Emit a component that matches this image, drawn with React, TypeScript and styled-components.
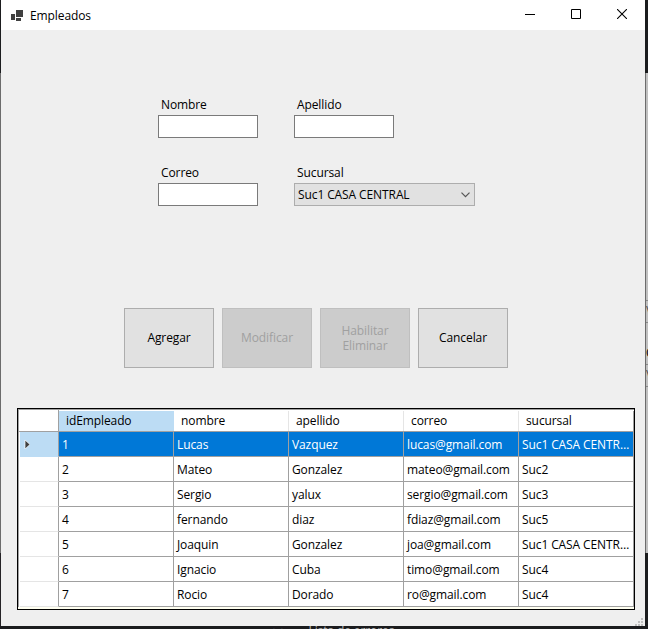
import React from "react";
import styled, { createGlobalStyle, css } from "styled-components";

const GlobalStyle = createGlobalStyle`
  * { box-sizing: border-box; }
  body { margin: 0; overflow: hidden; }
`;

const Desktop = styled.div`
  width: 648px;
  height: 629px;
  display: grid;
  grid-template-columns: 1px 644px 3px;
  grid-template-rows: 626px 3px;
  overflow: hidden;
  background: #1b1c1e;
  color: #000;
  font: 12px/15px "Open Sans", "Noto Sans", sans-serif;
  letter-spacing: -0.1px;
  white-space: nowrap;
`;

const LeftEdge = styled.div`
  background: linear-gradient(#1b1c1e 73px, #6c6c6c 73px, #6c6c6c 553px, #252326 553px);
`;

const RightEdge = styled.div`
  display: flex;
  flex-direction: column;
  padding-top: 73px;
`;

const BackPanel = styled.div`
  height: 480px;
  background: #c0c0c0;
  border-left: 1px solid #6c6c6c;
  padding-top: 227px;
  overflow: hidden;
`;

const BackField = styled.div`
  height: 23px;
  border: solid #8a8a8a;
  border-width: 1px 0;
  line-height: 19px;
  color: #444;
`;

const BackLabel = styled.div`
  height: 41px;
  padding-top: 22px;
`;

const BackStatus = styled.div`
  grid-column: 1 / -1;
  height: 3px;
  display: flex;
  gap: 10px;
  padding-left: 257px;
  overflow: hidden;
  color: #b8b8b8;
  line-height: 9px;
`;

const Window = styled.main`
  display: flex;
  flex-direction: column;
  background: #efefef;
`;

const TitleBar = styled.header`
  height: 30px;
  display: flex;
  align-items: center;
  background: #fff;
  padding-left: 9px;
`;

const Title = styled.span`
  flex: 1;
  padding-left: 6px;
`;

const CaptionButton = styled.button`
  width: 46px;
  height: 30px;
  padding: 0 0 2px;
  border: 0;
  background: none;
  display: grid;
  place-items: center;
`;

const Form = styled.section`
  display: grid;
  grid-template-columns: 100px 181px;
  column-gap: 36px;
  row-gap: 27px;
  padding: 67px 0 0 157px;
`;

const Field = styled.label`
  display: flex;
  flex-direction: column;
  gap: 3px;
  height: 41px;
`;

const FieldLabel = styled.span`
  padding-left: 3px;
`;

const TextBox = styled.input`
  width: 100px;
  height: 23px;
  border: 1px solid #7a7a7a;
  background: #fff;
`;

const Combo = styled.div`
  height: 23px;
  border: 1px solid #adadad;
  background: #e1e1e1;
  display: flex;
  align-items: center;
  justify-content: space-between;
  padding: 0 4px 0 3px;
`;

const Actions = styled.div`
  display: flex;
  gap: 8px;
  padding: 102px 0 0 123px;
`;

const ActionButton = styled.button`
  width: 90px;
  height: 60px;
  padding: 0 0 1px;
  font: inherit;
  letter-spacing: inherit;
  color: #000;
  border: 1px solid #adadad;
  background: #e1e1e1;
  white-space: pre-line;
  &:disabled {
    color: #a0a0a0;
    border-color: #bfbfbf;
    background: #cccccc;
  }
`;

const Grid = styled.div`
  width: 618px;
  height: 202px;
  margin: 40px 0 0 16px;
  border: 1px solid #000;
  background: #fffff0;
`;

const Rows = styled.div`
  border: solid #a0a0a0;
  border-width: 1px 0 0 1px;
  background: #fff;
`;

const Row = styled.div<{ $head?: boolean }>`
  height: ${(p) => (p.$head ? 22 : 25)}px;
  display: grid;
  grid-template-columns: 40px repeat(5, 115px);
`;

const HeadCell = styled.div<{ $active?: boolean; $last?: boolean }>`
  border-bottom: 1px solid #a0a0a0;
  padding: 3px 0 0 7px;
  background: linear-gradient(${(p) => (p.$active ? "#bcdcf4, #bcdcf4" : "#e5e5e5, #e5e5e5")}) right 1px top 1px / 1px 100% no-repeat;
  background-position: right 0 top 1px;
  ${(p) => p.$active && css`background-size: 100% 100%;`}
  ${(p) => p.$last && css`background-image: linear-gradient(#a0a0a0, #a0a0a0);`}
`;

const Corner = styled.div`
  border: solid #a0a0a0;
  border-width: 0 1px 1px 0;
`;

const RowHead = styled.div<{ $active?: boolean }>`
  margin-left: 1px;
  border-right: 1px solid #a0a0a0;
  border-bottom: 1px solid ${(p) => (p.$active ? "#bcdcf4" : "#e5e5e5")};
  background: ${(p) => (p.$active ? "#bcdcf4" : "#fff")};
  padding: 7px 0 0 4px;
`;

const Cell = styled.div<{ $active?: boolean }>`
  border: solid #a0a0a0;
  border-width: 0 1px 1px 0;
  padding: 5px 3px 0;
  overflow: hidden;
  text-overflow: ellipsis;
  color: ${(p) => (p.$active ? "#fff" : "#000")};
  background: ${(p) => (p.$active ? "#0078d7" : "#fff")};
`;

const GripRow = styled.div`
  display: flex;
  justify-content: flex-end;
  padding: 8px 2px 0 0;
`;

const columns = ["idEmpleado", "nombre", "apellido", "correo", "sucursal"];
const employees = [
  ["1", "Lucas", "Vazquez", "lucas@gmail.com", "Suc1 CASA CENTRAL"],
  ["2", "Mateo", "Gonzalez", "mateo@gmail.com", "Suc2"],
  ["3", "Sergio", "yalux", "sergio@gmail.com", "Suc3"],
  ["4", "fernando", "diaz", "fdiaz@gmail.com", "Suc5"],
  ["5", "Joaquin", "Gonzalez", "joa@gmail.com", "Suc1 CASA CENTRAL"],
  ["6", "Ignacio", "Cuba", "timo@gmail.com", "Suc4"],
  ["7", "Rocio", "Dorado", "ro@gmail.com", "Suc4"],
];

const AppIcon = () => (
  <svg width="14" height="13" viewBox="0 0 14 13" fill="#404040" shapeRendering="crispEdges">
    <path d="M1 5h4v6H1zM6 1h7v7H6zM6 9h5v3H6z" />
  </svg>
);

const Grip = () => (
  <svg width="8" height="8" fill="#bfbfbf" shapeRendering="crispEdges">
    <path d="M6 0h2v2H6zM3 3h2v2H3zM6 3h2v2H6zM0 6h2v2H0zM3 6h2v2H3zM6 6h2v2H6z" />
  </svg>
);

export default function App() {
  return (
    <>
      <GlobalStyle />
      <Desktop>
        <LeftEdge />
        <Window>
          <TitleBar>
            <AppIcon />
            <Title>Empleados</Title>
            <CaptionButton aria-label="Minimizar">
              <svg width="10" height="10" shapeRendering="crispEdges"><path d="M0 5h10v1H0z" /></svg>
            </CaptionButton>
            <CaptionButton aria-label="Maximizar">
              <svg width="10" height="10" fill="none" stroke="#000"><path d="M.5.5h9v9h-9z" /></svg>
            </CaptionButton>
            <CaptionButton aria-label="Cerrar">
              <svg width="10" height="10" stroke="#000" strokeWidth="1.1"><path d="M0 0L10 10M10 0L0 10" /></svg>
            </CaptionButton>
          </TitleBar>
          <Form>
            <Field><FieldLabel>Nombre</FieldLabel><TextBox /></Field>
            <Field><FieldLabel>Apellido</FieldLabel><TextBox /></Field>
            <Field><FieldLabel>Correo</FieldLabel><TextBox /></Field>
            <Field>
              <FieldLabel>Sucursal</FieldLabel>
              <Combo>
                Suc1 CASA CENTRAL
                <svg width="9" height="6" fill="none" stroke="#555" strokeWidth="1.2"><path d="M.5.7L4.5 4.7L8.5.7" /></svg>
              </Combo>
            </Field>
          </Form>
          <Actions>
            <ActionButton>Agregar</ActionButton>
            <ActionButton disabled>Modificar</ActionButton>
            <ActionButton disabled>{"Habilitar\nEliminar"}</ActionButton>
            <ActionButton>Cancelar</ActionButton>
          </Actions>
          <Grid>
            <Rows>
              <Row $head>
                <Corner />
                {columns.map((name, i) => (
                  <HeadCell key={name} $active={i === 0} $last={i === 4}>{name}</HeadCell>
                ))}
              </Row>
              {employees.map((employee, i) => (
                <Row key={employee[0]}>
                  <RowHead $active={i === 0}>
                    {i === 0 && (
                      <svg width="7" height="11" display="block"><path d="M1 1L6 5.5L1 10z" fill="#404040" stroke="#fff" strokeWidth=".7" /></svg>
                    )}
                  </RowHead>
                  {employee.map((value, c) => (
                    <Cell key={c} $active={i === 0}>{value}</Cell>
                  ))}
                </Row>
              ))}
            </Rows>
          </Grid>
          <GripRow><Grip /></GripRow>
        </Window>
        <RightEdge>
          <BackPanel>
            <BackField>\</BackField>
            <BackLabel>C</BackLabel>
            <BackField>\</BackField>
          </BackPanel>
        </RightEdge>
        <BackStatus><span>▾</span><span>ꟷ</span><span>▴</span><span>Lista de errores</span></BackStatus>
      </Desktop>
    </>
  );
}
